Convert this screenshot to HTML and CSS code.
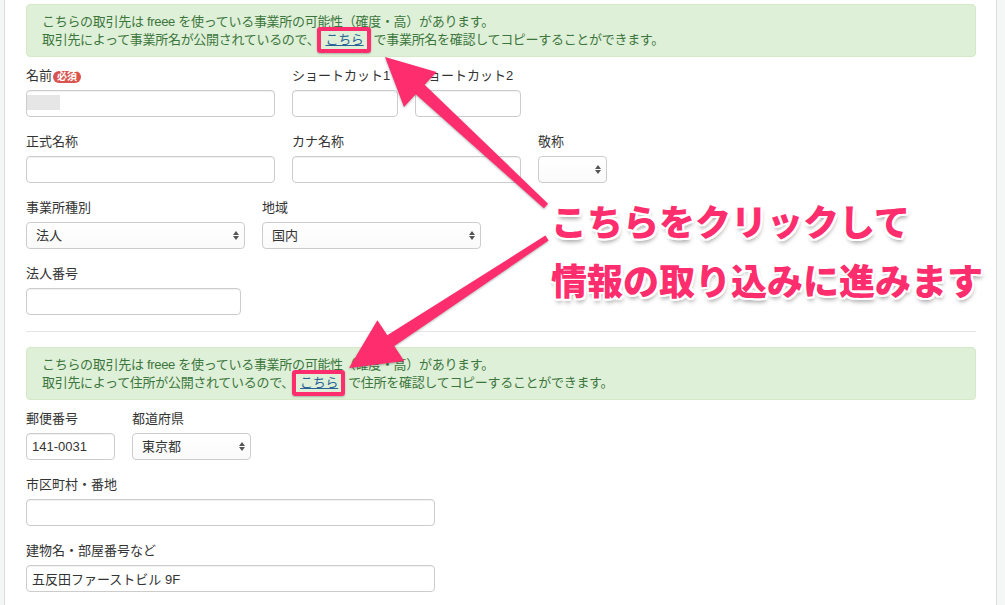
FILE: index.html
```html
<!DOCTYPE html>
<html lang="ja">
<head>
    <meta charset="UTF-8">
    <title>取引先の登録</title>
    <link rel="stylesheet" href="styles.css">
</head>
<body>
    <div class="panel">
        <div class="alert">
            こちらの取引先は freee を使っている事業所の可能性（確度・高）があります。<br>
            取引先によって事業所名が公開されているので、<a href="#" class="mark">こちら</a>で事業所名を確認してコピーすることができます。
        </div>

        <div class="row">
            <div class="field">
                <label>名前<span class="req">必須</span></label>
                <input type="text" class="w-249 masked">
            </div>
            <div class="field">
                <label>ショートカット1</label>
                <input type="text" class="w-106">
            </div>
            <div class="field">
                <label>ショートカット2</label>
                <input type="text" class="w-106">
            </div>
        </div>

        <div class="row">
            <div class="field">
                <label>正式名称</label>
                <input type="text" class="w-249">
            </div>
            <div class="field">
                <label>カナ名称</label>
                <input type="text" class="w-229">
            </div>
            <div class="field">
                <label>敬称</label>
                <div class="select w-69"><select><option></option></select></div>
            </div>
        </div>

        <div class="row">
            <div class="field">
                <label>事業所種別</label>
                <div class="select w-219"><select><option>法人</option></select></div>
            </div>
            <div class="field">
                <label>地域</label>
                <div class="select w-219"><select><option>国内</option></select></div>
            </div>
        </div>

        <div class="row">
            <div class="field">
                <label>法人番号</label>
                <input type="text" class="w-215">
            </div>
        </div>

        <hr>

        <div class="alert">
            こちらの取引先は freee を使っている事業所の可能性（確度・高）があります。<br>
            取引先によって住所が公開されているので、<a href="#" class="mark">こちら</a>で住所を確認してコピーすることができます。
        </div>

        <div class="row">
            <div class="field">
                <label>郵便番号</label>
                <input type="text" class="w-89" value="141-0031">
            </div>
            <div class="field">
                <label>都道府県</label>
                <div class="select w-119"><select><option>東京都</option></select></div>
            </div>
        </div>

        <div class="row">
            <div class="field">
                <label>市区町村・番地</label>
                <input type="text" class="w-409">
            </div>
        </div>

        <div class="row">
            <div class="field">
                <label>建物名・部屋番号など</label>
                <input type="text" class="w-409" value="五反田ファーストビル 9F">
            </div>
        </div>
    </div>

    <!-- annotation layer -->
    <svg class="arrows" width="1005" height="605" viewBox="0 0 1005 605">
        <polygon points="548.1,203.7 424.6,84.8 436.5,72 385,57 404,107 415.7,94.3 543.9,208.3"/>
        <polygon points="545.4,235.6 387.3,335.2 377.4,320.2 349,368 404.2,361 394.3,345.9 548.6,240.5"/>
    </svg>
    <div class="callout">こちらをクリックして<br>情報の取り込みに進みます</div>
</body>
</html>
```

FILE: styles.css
```css
body {
    margin: 0;
    position: relative;
    width: 1005px;
    height: 605px;
    overflow: hidden;
    background-color: #f5f6f6;
    font-family: "Liberation Sans", "Noto Sans CJK JP", sans-serif;
    font-size: 13px;
    color: #333;
}
.panel {
    margin-left: 4px;
    width: 950px;
    min-height: 605px;
    padding: 4px 20px 0 21px;
    background: #fff;
    border-left: 1px solid #dcdcdc;
    border-right: 1px solid #dcdcdc;
}
.alert {
    padding: 8px 15px 7px;
    margin-bottom: 10px;
    background-color: #dff0d8;
    border: 1px solid #d6e9c6;
    border-radius: 4px;
    color: #3c763d;
    font-size: 13px;
    letter-spacing: -0.3px;
    line-height: 18px;
}
.alert a {
    color: #2a6496;
    text-decoration: underline;
}
.mark {
    position: relative;
    margin: 0 10px 0 6px;
}
.mark::after {
    content: "";
    position: absolute;
    left: -8px;
    right: -7px;
    top: -5px;
    bottom: -6px;
    border: 4px solid #fe2d6d;
    border-radius: 3px;
    box-shadow: 0 1px 2px rgba(0, 0, 0, 0.25);
}
.row {
    display: flex;
    gap: 17px;
    margin-bottom: 16px;
}
.field {
    display: flex;
    flex-direction: column;
}
label {
    height: 18px;
    line-height: 18px;
    margin-bottom: 5px;
    white-space: nowrap;
}
.req {
    display: inline-block;
    vertical-align: 0;
    margin-left: 1px;
    padding: 0 4px;
    height: 12px;
    line-height: 12px;
    font-size: 10px;
    font-weight: bold;
    color: #fff;
    background-color: #d9534f;
    border-radius: 6px;
}
input {
    box-sizing: border-box;
    height: 27px;
    padding: 0 5px;
    border: 1px solid #ccc;
    border-radius: 4px;
    box-shadow: inset 0 1px 1px rgba(0, 0, 0, 0.06);
    font-family: inherit;
    font-size: 13px;
    color: #333;
}
input.masked {
    background: linear-gradient(#e6e6e6, #e6e6e6) no-repeat 0 4px / 33px 15px, #fff;
}
.select {
    position: relative;
    height: 27px;
}
.select select {
    -webkit-appearance: none;
    appearance: none;
    box-sizing: border-box;
    width: 100%;
    height: 27px;
    padding: 0 20px 0 9px;
    border: 1px solid #ccc;
    border-radius: 4px;
    background: linear-gradient(#fff, #fafafa);
    font-family: inherit;
    font-size: 13px;
    color: #333;
}
.select::before,
.select::after {
    content: "";
    position: absolute;
    right: 6px;
    border-left: 3px solid transparent;
    border-right: 3px solid transparent;
}
.select::before {
    top: 9px;
    border-bottom: 4px solid #555;
}
.select::after {
    top: 14px;
    border-top: 4px solid #555;
}
hr {
    margin: 0 0 15px;
    border: 0;
    border-top: 1px solid #e5e5e5;
}
.w-69 { width: 69px; }
.w-89 { width: 89px; }
.w-106 { width: 106px; }
.w-119 { width: 119px; }
.w-215 { width: 215px; }
.w-219 { width: 219px; }
.w-229 { width: 229px; }
.w-249 { width: 249px; }
.w-409 { width: 409px; }
.arrows {
    position: absolute;
    left: 0;
    top: 0;
    pointer-events: none;
    fill: #fe2d6d;
    filter: drop-shadow(0 1px 1px rgba(0, 0, 0, 0.3));
}
.callout {
    position: absolute;
    left: 551px;
    top: 191px;
    font-family: "Noto Sans CJK JP", sans-serif;
    font-size: 36px;
    font-weight: 900;
    line-height: 59px;
    color: #fe2d6d;
    white-space: nowrap;
    text-shadow:
        2px 0 0 #fff, -2px 0 0 #fff, 0 2px 0 #fff, 0 -2px 0 #fff,
        2px 2px 0 #fff, -2px 2px 0 #fff, 2px -2px 0 #fff, -2px -2px 0 #fff,
        1px 4px 4px rgba(0, 0, 0, 0.35);
}
```
